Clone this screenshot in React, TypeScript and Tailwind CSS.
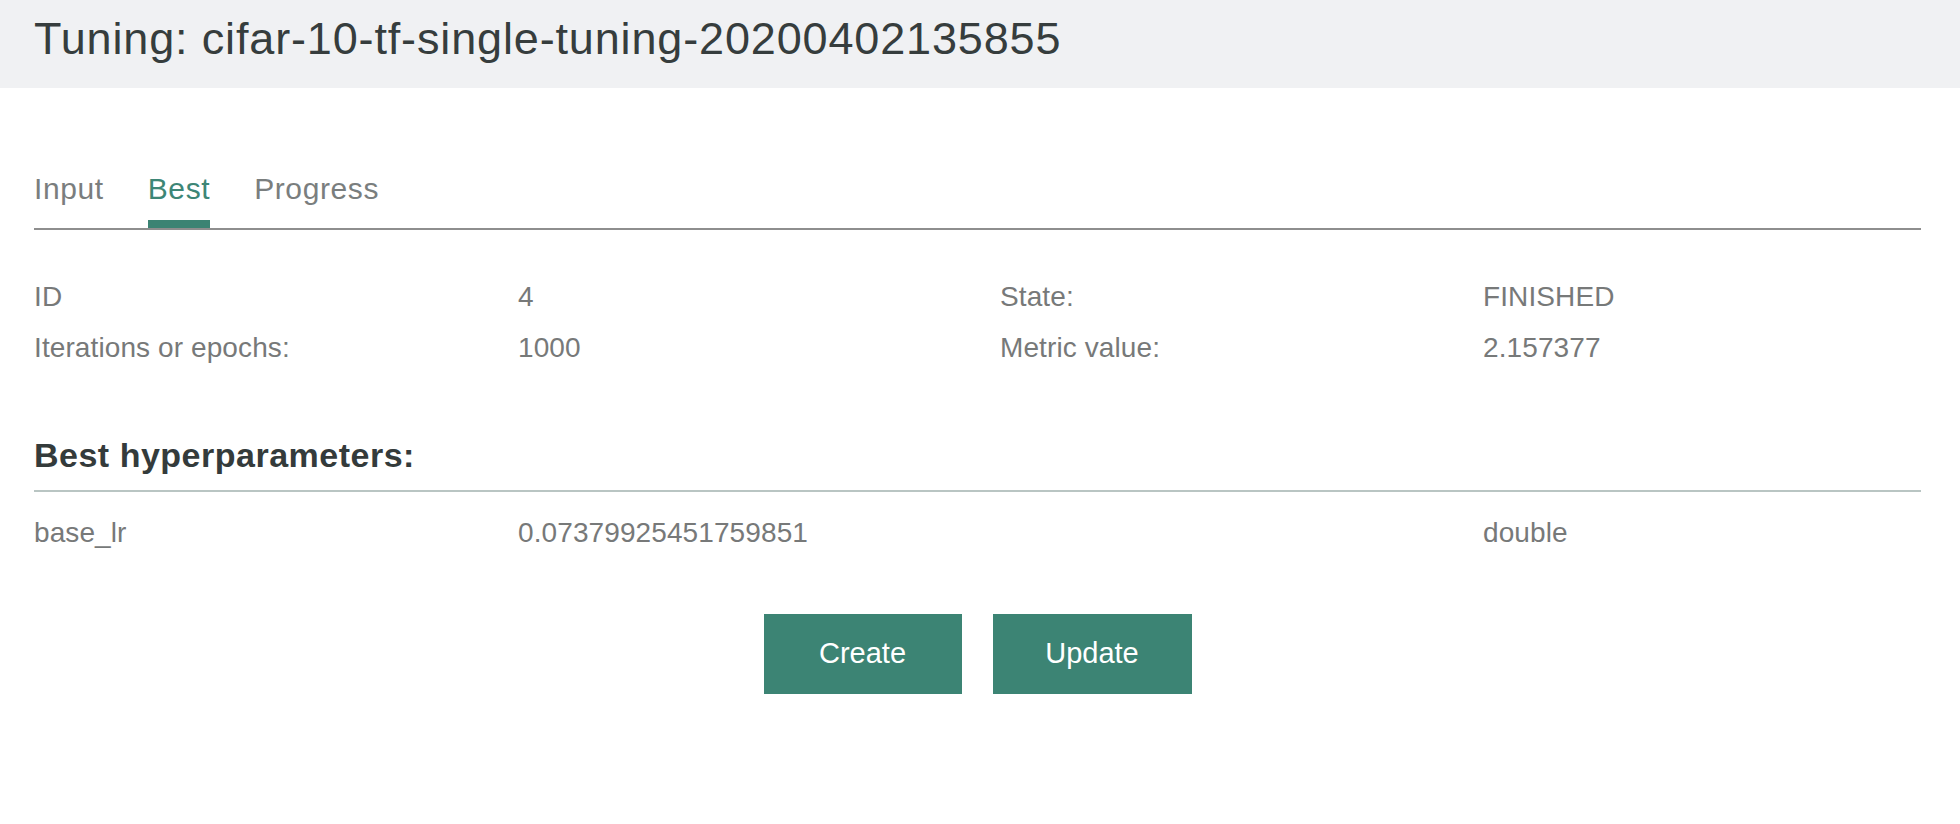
import React from "react";

const font = { fontFamily: '"Liberation Sans", Arial, Helvetica, sans-serif' };

export default function App() {
  return (
    <div className="min-h-[824px] w-full bg-white" style={font}>
      <div className="h-[88px] bg-[#f0f1f3] pl-[34px] pt-[16px]">
        <h1 className="text-[45px] leading-[45px] font-normal text-[#363d3d] tracking-[0.85px]">
          Tuning: cifar-10-tf-single-tuning-20200402135855
        </h1>
      </div>

      <div className="pl-[34px] pr-[39px]">
        <div className="mt-[86px] flex gap-[44px] border-b-2 border-[#8e8e8e]">
          <div className="flex flex-col">
            <span className="text-[30px] leading-[30px] tracking-[0.6px] text-[#7a7e7e]">Input</span>
            <span className="mt-[16px] h-[8px]" />
          </div>
          <div className="flex flex-col">
            <span className="text-[30px] leading-[30px] tracking-[0.6px] text-[#3d8676]">Best</span>
            <span className="mt-[16px] h-[8px] bg-[#3b8373]" />
          </div>
          <div className="flex flex-col">
            <span className="text-[30px] leading-[30px] tracking-[0.6px] text-[#7a7e7e]">Progress</span>
            <span className="mt-[16px] h-[8px]" />
          </div>
        </div>

        <div className="mt-[41px] grid grid-cols-[484px_482px_483px_1fr] text-[28px] leading-[51px] tracking-[0.1px] text-[#777979]">
          <div>ID</div>
          <div>4</div>
          <div>State:</div>
          <div>FINISHED</div>
          <div>Iterations or epochs:</div>
          <div>1000</div>
          <div>Metric value:</div>
          <div>2.157377</div>
        </div>

        <h2 className="mt-[65px] border-b-2 border-[#b9c5c3] pb-[18px] text-[34px] leading-[34px] font-bold tracking-[0.5px] text-[#343b3b]">
          Best hyperparameters:
        </h2>

        <div className="mt-[27px] grid grid-cols-[484px_482px_483px_1fr] text-[28px] leading-[28px] tracking-[0.1px] text-[#777979]">
          <div>base_lr</div>
          <div>0.07379925451759851</div>
          <div />
          <div>double</div>
        </div>

        <div className="mt-[67px] flex justify-center gap-[31px]">
          <button className="h-[80px] w-[198px] bg-[#3c8474] text-[29px] text-white">Create</button>
          <button className="h-[80px] w-[199px] bg-[#3c8474] text-[29px] text-white">Update</button>
        </div>
      </div>
    </div>
  );
}
